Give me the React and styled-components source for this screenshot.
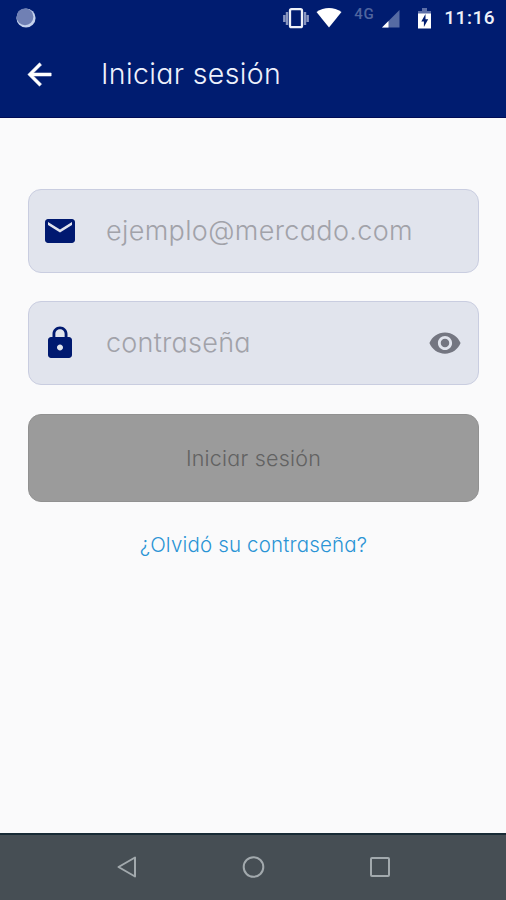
import React, { useState } from 'react';
import styled, { createGlobalStyle } from 'styled-components';
import { MdArrowBack, MdEmail, MdLock, MdRemoveRedEye } from 'react-icons/md';

const Global = createGlobalStyle`
	* {
		box-sizing: border-box;
	}

	body {
		margin: 0;
		background: #fafafb;
		font-family: Inter, 'Open Sans', sans-serif;
		font-feature-settings: 'cv11' 1;
	}
`;

const Screen = styled.div`
	display: flex;
	flex-direction: column;
	height: 900px;
	width: 506px;
	overflow: hidden;
`;

const Header = styled.header`
	height: 118px;
	background: #001c70;
	border-bottom: 1px solid #000c55;
	color: white;
`;

const StatusBar = styled.div`
	display: flex;
	align-items: center;
	justify-content: space-between;
	height: 36px;
	padding: 0 11px 0 15px;
`;

const Icons = styled.div`
	display: flex;
	align-items: center;
	height: 36px;
`;

const Clock = styled.time`
	margin-left: 13px;
	font: 500 19px/38px Roboto, sans-serif;
	letter-spacing: 0.5px;
	color: #eef1fa;
`;

const Network = styled.span`
	width: 23px;
	margin-left: 12px;
	padding-bottom: 9px;
	font: 500 15px/18px Roboto, sans-serif;
	letter-spacing: 0.8px;
	color: #50659f;
`;

const Wifi = styled.svg`
	margin-left: 7px;
`;

const Signal = styled.svg`
	margin-left: 4px;
`;

const Battery = styled.svg`
	margin-left: 18px;
`;

const AppBar = styled.div`
	display: flex;
	align-items: center;
	height: 76px;
	padding-left: 22px;
`;

const BackButton = styled.button`
	display: flex;
	padding: 0;
	border: 0;
	background: none;
	color: white;
	cursor: pointer;

	& path:last-child {
		stroke: white;
		stroke-width: 0.4px;
	}
`;

const Title = styled.h1`
	margin: 0 0 0 44px;
	font-size: 28.5px;
	font-weight: 300;
	line-height: 40px;
	letter-spacing: 0.36px;
	color: #eef1fc;
`;

const Form = styled.form`
	flex: 1;
	display: flex;
	flex-direction: column;
	padding: 71px 27px 0 28px;
`;

const Field = styled.label`
	display: flex;
	align-items: center;
	height: 84px;
	margin-bottom: ${(props) => props.$gap};
	padding: 0 16px 0 13px;
	border: 1px solid #c9cde0;
	border-radius: 13px;
	background: #e1e4ed;
	color: #001970;

	& > svg {
		flex: none;
	}
`;

const Input = styled.input`
	flex: 1;
	min-width: 0;
	height: 44px;
	margin-left: 28px;
	padding: 0 0 1px;
	border: 0;
	outline: 0;
	background: transparent;
	font-family: inherit;
	font-feature-settings: inherit;
	font-size: 27px;
	font-weight: 300;
	letter-spacing: ${(props) => props.$spacing};
	color: #333;

	&::placeholder {
		color: #a1a2a9;
		opacity: 1;
	}
`;

const EyeButton = styled.button`
	display: flex;
	padding: 0;
	border: 0;
	background: none;
	color: #747681;
	cursor: pointer;
`;

const Submit = styled.button`
	height: 88px;
	padding: 0;
	border: 1px solid #919191;
	border-radius: 13px;
	background: #9b9b9b;
	font-family: inherit;
	font-feature-settings: inherit;
	font-size: 21.5px;
	font-weight: 300;
	letter-spacing: 0.22px;
	color: #626262;
`;

const Forgot = styled.a`
	align-self: center;
	margin-top: 28px;
	font-size: 20.5px;
	font-weight: 300;
	line-height: 30px;
	letter-spacing: 0.17px;
	color: #2a94d5;
	text-decoration: none;
`;

const NavBar = styled.nav`
	display: grid;
	grid-template-columns: repeat(3, 126px);
	justify-content: center;
	align-items: center;
	justify-items: center;
	height: 67px;
	padding-bottom: 2px;
	border-top: 2px solid #182b36;
	background: #464e54;
`;

const Status = () => (
	<StatusBar>
		<svg width="22" height="22" viewBox="0 0 22 22">
			<circle cx="11" cy="11" r="9.6" fill="#c4d1ec" />
			<circle cx="10" cy="9.8" r="8.4" fill="#7080b4" />
		</svg>
		<Icons>
			<svg width="26" height="24" viewBox="0 0 26 24">
				<path d="M1.3 9v7M4 6v13M22 6v13M24.7 9v7" stroke="#8996c0" strokeWidth="2.4" />
				<rect x="7" y="3.2" width="12" height="18" rx="1.5" fill="none" stroke="#eef1f8" strokeWidth="2.3" />
			</svg>
			<Wifi width="26" height="21" viewBox="0 0 26 21">
				<path d="M.5 4C8-1.2 18-1.2 25.5 4L13 19.5Z" fill="white" />
			</Wifi>
			<Network>4G</Network>
			<Signal width="19" height="19" viewBox="0 0 19 19">
				<path d="M18.5 1v17.5H1Z" fill="#566ba4" />
				<path d="M7.5 12v6.5H1Z" fill="white" />
			</Signal>
			<Battery width="13" height="21" viewBox="0 0 13 21">
				<path d="M4 0h5v3h4v4H0V3h4Z" fill="#5d6fa8" />
				<path d="M0 5.5h13v15H0Z" fill="white" />
				<path d="M7.5 6 3.3 13.5h2.6V19l4.3-7.7H7.5Z" fill="#001c70" />
			</Battery>
			<Clock>11:16</Clock>
		</Icons>
	</StatusBar>
);

const App = () => {
	const [visible, setVisible] = useState(false);

	return (
		<>
			<Global />
			<Screen>
				<Header>
					<Status />
					<AppBar>
						<BackButton type="button" aria-label="Volver">
							<MdArrowBack size={35} />
						</BackButton>
						<Title>Iniciar sesión</Title>
					</AppBar>
				</Header>
				<Form onSubmit={(e) => e.preventDefault()}>
					<Field $gap="28px">
						<MdEmail size={36} />
						<Input type="email" placeholder="ejemplo@mercado.com" $spacing="0.35px" />
					</Field>
					<Field $gap="29px">
						<MdLock size={36} />
						<Input type={visible ? 'text' : 'password'} placeholder="contraseña" $spacing="0.25px" />
						<EyeButton type="button" aria-label="Mostrar" onClick={() => setVisible(!visible)}>
							<MdRemoveRedEye size={34} />
						</EyeButton>
					</Field>
					<Submit disabled>Iniciar sesión</Submit>
					<Forgot href="#">¿Olvidó su contraseña?</Forgot>
				</Form>
				<NavBar>
					<svg width="22" height="24" viewBox="0 0 22 24" fill="none" stroke="#a2a9ad" strokeWidth="2">
						<path d="M19 2.5v19L2.5 12Z" strokeLinejoin="round" />
					</svg>
					<svg width="24" height="24" viewBox="0 0 24 24" fill="none" stroke="#a2a9ad" strokeWidth="2">
						<circle cx="12.5" cy="12" r="9.8" />
					</svg>
					<svg width="22" height="22" viewBox="0 0 22 22" fill="none" stroke="#a2a9ad" strokeWidth="2">
						<rect x="3" y="2" width="18" height="18" rx="1" />
					</svg>
				</NavBar>
			</Screen>
		</>
	);
};

export default App;
